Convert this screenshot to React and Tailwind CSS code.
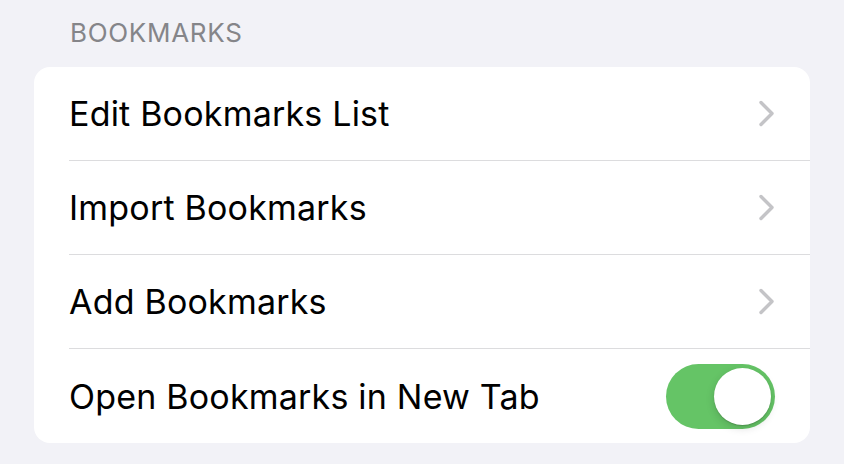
import React, { useState } from 'react';

const font = { fontFamily: 'Inter, "Noto Sans", sans-serif' };

const Chevron = () => (
	<svg width="17" height="27" viewBox="0 0 17 27" fill="none" className="shrink-0">
		<path d="M3 2.5 L14 13.5 L3 24.5" stroke="#c4c4c7" strokeWidth="3.4" strokeLinecap="round" strokeLinejoin="round" />
	</svg>
);

const Toggle = ({ on, onClick }) => (
	<button
		onClick={onClick}
		className={`relative w-[109px] h-[65px] rounded-full shrink-0 transition-colors ${on ? 'bg-[#65c466]' : 'bg-[#e9e9ea]'}`}
	>
		<span
			className={`absolute top-[4px] w-[57px] h-[57px] rounded-full bg-white shadow-[0_3px_8px_rgba(0,0,0,0.15),0_1px_1px_rgba(0,0,0,0.16)] transition-all ${
				on ? 'left-[48px]' : 'left-[4px]'
			}`}
		/>
	</button>
);

const Row = ({ label, last, children }) => (
	<div className="pl-[35px]">
		<div className={`h-[94px] flex items-center justify-between pr-[35px] ${last ? '' : 'border-b border-[#dcdcde]'}`}>
			<span className="text-[34px] text-black tracking-[0.2px]">{label}</span>
			{children}
		</div>
	</div>
);

export default function App() {
	const [openInNewTab, setOpenInNewTab] = useState(true);

	return (
		<div style={font} className="w-[844px] h-[464px] bg-[#f2f2f7] overflow-hidden px-[34px] pt-[17px]">
			<div className="pl-[36px] h-[50px] text-[26px] leading-[32px] text-[#858589] tracking-[0.7px]">BOOKMARKS</div>
			<div className="bg-white rounded-[16px] overflow-hidden">
				<Row label="Edit Bookmarks List">
					<Chevron />
				</Row>
				<Row label="Import Bookmarks">
					<Chevron />
				</Row>
				<Row label="Add Bookmarks">
					<Chevron />
				</Row>
				<Row label="Open Bookmarks in New Tab" last>
					<Toggle on={openInNewTab} onClick={() => setOpenInNewTab(!openInNewTab)} />
				</Row>
			</div>
		</div>
	);
}
